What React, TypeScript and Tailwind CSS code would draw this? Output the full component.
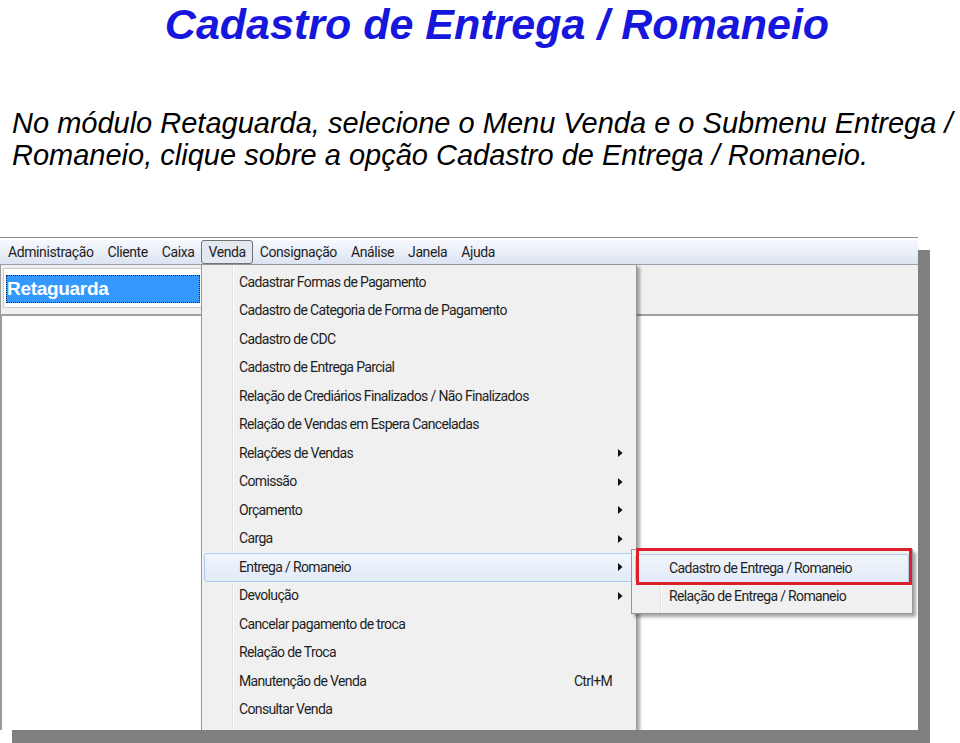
import React from "react";

const menuFont = { fontFamily: "Roboto, 'Noto Sans', sans-serif" };
const arial = { fontFamily: "'Liberation Sans', Arial, sans-serif" };

const topMenu = ["Administração", "Cliente", "Caixa", "Venda", "Consignação", "Análise", "Janela", "Ajuda"];

const vendaItems = [
  { label: "Cadastrar Formas de Pagamento" },
  { label: "Cadastro de Categoria de Forma de Pagamento" },
  { label: "Cadastro de CDC" },
  { label: "Cadastro de Entrega Parcial" },
  { label: "Relação de Crediários Finalizados / Não Finalizados" },
  { label: "Relação de Vendas em Espera Canceladas" },
  { label: "Relações de Vendas", sub: true },
  { label: "Comissão", sub: true },
  { label: "Orçamento", sub: true },
  { label: "Carga", sub: true },
  { label: "Entrega / Romaneio", sub: true, active: true },
  { label: "Devolução", sub: true },
  { label: "Cancelar pagamento de troca" },
  { label: "Relação de Troca" },
  { label: "Manutenção de Venda", shortcut: "Ctrl+M" },
  { label: "Consultar Venda" },
];

const Arrow = () => (
  <svg width="5" height="8" viewBox="0 0 5 8" className="shrink-0">
    <path d="M0 0 L4.5 4 L0 8 Z" fill="#111" />
  </svg>
);

// menu background with the icon gutter line drawn in
const gutter30 =
  "bg-[linear-gradient(to_right,#f0f0f0_30px,#e2e2e2_30px,#e2e2e2_31px,#ffffff_31px,#ffffff_32px,#f0f0f0_32px)]";
const gutter28 =
  "bg-[linear-gradient(to_right,#f0f0f0_28px,#e2e2e2_28px,#e2e2e2_29px,#ffffff_29px,#ffffff_30px,#f0f0f0_30px)]";

const App = () => {
  return (
    <div className="w-[960px] h-[743px] bg-white overflow-hidden">
      <h1
        className="text-[43px] leading-[48px] font-bold italic text-center text-[#1616dc] pl-[34px] whitespace-nowrap"
        style={arial}
      >
        Cadastro de Entrega / Romaneio
      </h1>

      <p
        className="mt-[59px] pl-[12px] text-[29px] leading-[32px] italic text-black whitespace-nowrap"
        style={arial}
      >
        No módulo Retaguarda, selecione o Menu Venda e o Submenu Entrega /
        <br />
        Romaneio, clique sobre a opção Cadastro de Entrega / Romaneio.
      </p>

      {/* screenshot frame */}
      <div
        className="relative mt-[66px] w-[918px] h-[493px] bg-white border-t border-[#8a8a8a] shadow-[12px_13px_0_#808080] overflow-hidden flex flex-col"
        style={menuFont}
      >
        {/* menubar */}
        <div className="mt-[2px] h-[25px] shrink-0 flex items-center pl-[1px] bg-gradient-to-b from-[#f7f9fd] to-[#dce3f2] border-b border-[#9aa0ab] text-[14px] text-[#1e1e1e] tracking-[-0.4px]">
          {topMenu.map((m) => (
            <div
              key={m}
              className={
                m === "Venda"
                  ? "h-[24px] flex items-center px-[6px] border border-[#6f7378] rounded-[3px] bg-[#e4e8ef]"
                  : "h-[24px] flex items-center px-[7px]"
              }
            >
              {m}
            </div>
          ))}
        </div>

        {/* toolbar */}
        <div className="h-[51px] shrink-0 bg-[#f0f0f0] border-b-2 border-[#a0a0a0] border-l border-l-[#9a9a9a] pt-[3px] pl-[2px]">
          <div className="w-[200px] h-[40px] bg-white border border-[#c9c9c9] p-[2px]">
            <div
              className="h-[28px] mt-[4px] bg-[#3399ff] border border-dotted border-[#1a2a44] flex items-center text-white text-[19px] font-bold tracking-[-0.3px]"
              style={arial}
            >
              Retaguarda
            </div>
          </div>
        </div>

        {/* work area */}
        <div className="flex-1 bg-white border-l-2 border-[#9a9a9a]" />

        {/* Venda dropdown */}
        <div
          className={`absolute left-[201px] top-[26px] w-[436px] h-[480px] ${gutter30} border border-[#979797] shadow-[3px_3px_3px_rgba(0,0,0,0.35)] pt-[3px] text-[14px] text-[#1e1e1e] tracking-[-0.65px] flex flex-col`}
        >
          {vendaItems.map((it) => (
            <div
              key={it.label}
              className={
                it.active
                  ? "mx-[2px] h-[28.5px] shrink-0 flex items-center pl-[34px] pr-[10px] rounded-[3px] border border-[#aecbee] bg-gradient-to-b from-[#f2f6fc] to-[#e1eaf8]"
                  : "mx-[2px] h-[28.5px] shrink-0 flex items-center pl-[34px] pr-[10px] border border-transparent"
              }
            >
              <span className="flex-1">{it.label}</span>
              {it.shortcut && <span className="mr-[11px]">{it.shortcut}</span>}
              {it.sub && <Arrow />}
            </div>
          ))}
        </div>

        {/* Entrega / Romaneio submenu */}
        <div
          className={`absolute left-[631px] top-[311px] w-[282px] h-[65px] ${gutter28} border border-[#979797] shadow-[3px_3px_3px_rgba(0,0,0,0.35)] pt-[4px] text-[14px] text-[#1e1e1e] tracking-[-0.65px] flex flex-col`}
        >
          <div className="mx-[3px] h-[28.5px] flex items-center pl-[33px] rounded-[3px] border border-[#aecbee] bg-gradient-to-b from-[#f2f6fc] to-[#e1eaf8]">
            Cadastro de Entrega / Romaneio
          </div>
          <div className="mx-[3px] h-[28.5px] flex items-center pl-[34px]">
            Relação de Entrega / Romaneio
          </div>
          {/* red annotation box */}
          <div className="absolute left-[4px] top-[-2px] w-[276px] h-[37px] border-[3px] border-[#dc1f2b]" />
        </div>
      </div>
    </div>
  );
};

export default App;
